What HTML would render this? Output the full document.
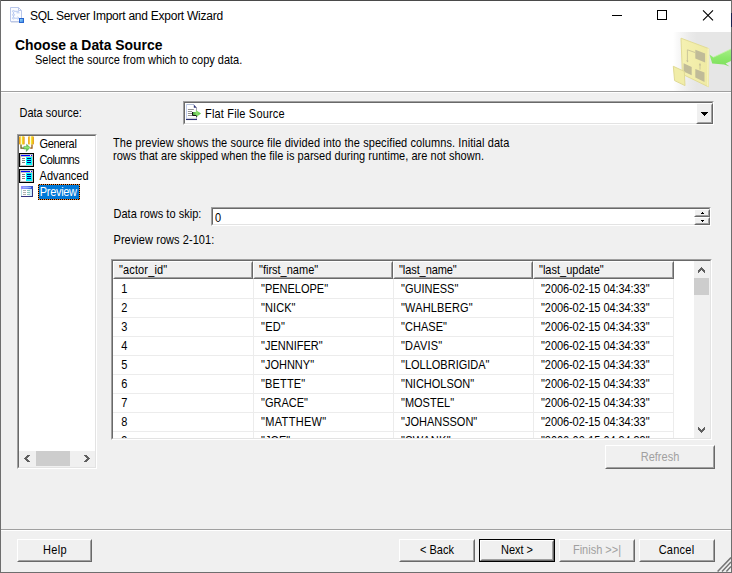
<!DOCTYPE html>
<html>
<head>
<meta charset="utf-8">
<title>SQL Server Import and Export Wizard</title>
<style>
*{box-sizing:border-box;margin:0;padding:0}
html,body{width:732px;height:573px;overflow:hidden;background:#f0f0f0}
body{font-family:"Liberation Sans",sans-serif;font-size:11px;color:#000;position:relative}
.abs{position:absolute}
.t{position:absolute;white-space:nowrap;line-height:13px;font-size:11px;transform-origin:0 10px;transform:scaleY(1.1)}
#win{position:absolute;left:0;top:0;width:732px;height:573px;background:#f0f0f0;overflow:hidden}
#titlebar{left:1px;top:1px;width:730px;height:31px;background:#fff}
#title{left:30px;top:9px;font-size:12px;line-height:15px;letter-spacing:-0.25px;transform:none}
#header{left:1px;top:32px;width:730px;height:59px;background:#fff}
#hgrad{left:668px;top:32px;width:63px;height:59px;background:linear-gradient(to right,#fff 0%,#fff 8%,#f3f3f3 22%,#eaeaea 36%,#e6e6e6 46%,#e6e6e6 100%)}
#h1{left:15.3px;top:37px;font-size:14px;font-weight:bold;line-height:16px;transform-origin:0 0;transform:scaleX(0.992)}
#h2{left:35px;top:54px}
.sepd{height:1px;background:#a0a0a0}
.sepl{height:1px;background:#fff}
.sunken{position:absolute;background:#fff;border:1px solid;border-color:#a0a0a0 #fff #fff #a0a0a0;}
.sunken>.in{position:absolute;left:0;top:0;right:0;bottom:0;border:1px solid;border-color:#696969 #e3e3e3 #e3e3e3 #696969}
.btn{position:absolute;height:23px;background:#f0f0f0;border:1px solid;border-color:#fff #696969 #696969 #fff;text-align:center;font-size:11px;line-height:13px;white-space:nowrap}
.btn>.in{position:absolute;left:0;top:0;right:0;bottom:0;border:1px solid;border-color:#f0f0f0 #a0a0a0 #a0a0a0 #f0f0f0}
.btn>span{position:absolute;left:0;right:0;top:4px;transform-origin:0 10px;transform:scaleY(1.1)}
.btn.dis{color:#a0a0a0}
.btn.def{border-color:#000;}
.btn.def>.in{border-color:#fff #696969 #696969 #fff}
.btn.def>.in>i{position:absolute;left:0;top:0;right:0;bottom:0;border:1px solid;border-color:#f0f0f0 #a0a0a0 #a0a0a0 #f0f0f0}
.raised{position:absolute;background:#f0f0f0;border:1px solid;border-color:#fff #696969 #696969 #fff}
.raised>.in{position:absolute;left:0;top:0;right:0;bottom:0;border:1px solid;border-color:#f0f0f0 #a0a0a0 #a0a0a0 #f0f0f0}
.hl{position:absolute;height:1px;background:#ececec}
.vl{position:absolute;width:1px;background:#ececec}
#gridclip{position:absolute;left:113px;top:261px;width:597px;height:177px;overflow:hidden}
.c{position:absolute;white-space:nowrap;line-height:13px;font-size:11px;transform-origin:0 10px;transform:scaleY(1.1)}
</style>
</head>
<body>
<div id="win">
<div id="titlebar" class="abs"></div>
<svg class="abs" style="left:9px;top:6px" width="17" height="18" viewBox="0 0 17 18">
<defs><linearGradient id="tg" x1="0" y1="0" x2="1" y2="1"><stop offset="0" stop-color="#9fe0ff"/><stop offset="1" stop-color="#2f7fe0"/></linearGradient></defs>
<path d="M1.5 1.5 H9.5 L12.5 4.5 V15.5 H1.5 Z" fill="#fbfcff" stroke="#b9c7ea" stroke-width="1"/>
<path d="M9.5 1.5 V4.5 H12.5" fill="none" stroke="#b9c6ea" stroke-width="1"/>
<path d="M2 16.2 H12.5" stroke="#c5cbe0" stroke-width="1" opacity=".8"/>
<g fill="none" stroke="#b7c8f0" stroke-width="1">
<rect x="3.5" y="4.5" width="2" height="1.6" rx=".8"/><rect x="3.5" y="8" width="2" height="1.6" rx=".8"/><rect x="3.5" y="11.3" width="2" height="1.6" rx=".8"/>
<path d="M4.5 6.2V8M4.5 9.7V11.2M6 5.3H10M7.5 6.8H10.5M6 12.2H9.5M8.5 10.8L10 12.2L8.5 13.6"/>
</g>
<rect x="10.5" y="12.5" width="4" height="4" fill="url(#tg)" stroke="#2a66cf" stroke-width="1"/>
</svg>
<div id="title" class="t">SQL Server Import and Export Wizard</div>
<svg class="abs" style="left:600px;top:1px" width="131" height="30" viewBox="0 0 131 30">
<path d="M12 14.5H22" stroke="#000" stroke-width="1"/>
<rect x="57.5" y="9.5" width="9" height="9" fill="none" stroke="#000" stroke-width="1"/>
<path d="M103 9.3L113 19.3M113 9.3L103 19.3" stroke="#000" stroke-width="1.1"/>
</svg>
<div id="header" class="abs"></div>
<div id="hgrad" class="abs"></div>
<svg class="abs" style="left:668px;top:32px" width="63" height="59" viewBox="668 32 63 59">
<defs>
<linearGradient id="yg" x1="0" y1="0" x2="1" y2="0"><stop offset="0" stop-color="#f5f1b2"/><stop offset="1" stop-color="#efeaa2"/></linearGradient>
<linearGradient id="gg" x1="0" y1="0" x2="0" y2="1"><stop offset="0" stop-color="#a6ee88"/><stop offset=".5" stop-color="#8ce86a"/><stop offset="1" stop-color="#7ee05e"/></linearGradient>
</defs>
<path d="M681 38.2 L708.8 48.6 L708.4 86.8 L682.4 74.2 Z" fill="url(#yg)" stroke="#e2dc96" stroke-width="1"/>
<path d="M707.7 48.3 L708.8 48.6 L708.4 86.8 L707.3 86.3 Z" fill="#f9f6c6"/>
<path d="M695.3 49.8 L705.1 53.4 L705.1 62.4 L695.3 58.6 Z" fill="#c0bb98"/>
<path d="M683.6 63.2 L691.7 66.9 L691.7 75.3 L683.6 71.4 Z" fill="#c0bb98"/>
<path d="M695.3 69 L704.5 72.6 L704.5 82 L695.3 77.6 Z" fill="#c0bb98"/>
<path d="M695.3 52.6 L687.4 49.8 L687.4 61.6" fill="none" stroke="#cbc69a" stroke-width="1"/>
<path d="M686.2 60.2 L687.4 62.6 L688.6 60.8 Z" fill="#c4bf98"/>
<path d="M700 69.6 L700 64.4" fill="none" stroke="#cbc69a" stroke-width="1"/>
<path d="M698.9 65.2 L700 62.8 L701.1 65.6 Z" fill="#c4bf98"/>
<path d="M673.3 66.3 L684.3 71.4 L685 85.6 L674.6 80.6 Z" fill="#f1eda8" stroke="#e0da94" stroke-width="1"/>
<path d="M709.5 54.6 L713.3 57.3 L731 49 L731 61 L725.6 63.4 L729.6 66.4 L724 64.6 L712.2 63.4 Z" fill="url(#gg)"/>
<path d="M713.3 57.3 L731 49" stroke="#c4f4a8" stroke-width="1" opacity=".8"/>
</svg>
<div id="h1" class="t">Choose a Data Source</div>
<div id="h2" class="t">Select the source from which to copy data.</div>
<div class="abs sepd" style="left:1px;top:91px;width:730px"></div>
<div class="abs sepl" style="left:1px;top:92px;width:730px"></div>
<div class="t" style="left:19.5px;top:107px">Data source:</div>
<div class="sunken" style="left:183px;top:101px;width:531px;height:24px"><div class="in"></div></div>
<svg class="abs" style="left:185px;top:103px" width="17" height="18" viewBox="0 0 17 18">
<defs><linearGradient id="cg" x1="0" y1="0" x2="1" y2="0"><stop offset="0" stop-color="#3c9a38"/><stop offset=".5" stop-color="#8ee070"/><stop offset="1" stop-color="#58c244"/></linearGradient></defs>
<path d="M1 1 H9 L12 4 V16.5 H1 Z" fill="#fff"/>
<path d="M1.5 16 V1.5" stroke="#c4d0f0" stroke-width="1"/>
<path d="M1.5 1.5 H9" stroke="#b4c0d8" stroke-width="1"/>
<path d="M11.5 4.5 V16" stroke="#a4a4b4" stroke-width="1"/>
<path d="M2 15.3 H11.5" stroke="#d2d2dc" stroke-width="1"/>
<path d="M1 16.5 H12" stroke="#2c3272" stroke-width="1.1"/>
<path d="M8.8 1.6 L11.8 4.7 H8.8 Z" fill="#2e3474"/>
<path d="M2.9 6.5H8.8M2.9 8.5H7M2.9 10.5H7M2.9 12.5H7.4" stroke="#949494" stroke-width="1"/>
<path d="M7.4 8.9 H10.9 V7 L16 10.4 L11.4 14 L10.9 12.4 H7.4 Z" fill="url(#cg)"/>
<path d="M7.5 9 V12.5 H11.2 L11.8 13.8" fill="none" stroke="#141414" stroke-width="1"/>
</svg>
<div class="t" style="left:205px;top:108px;letter-spacing:0.17px">Flat File Source</div>
<div class="raised" style="left:696px;top:103px;width:17px;height:21px"><div class="in"></div></div>
<svg class="abs" style="left:701px;top:112px" width="7" height="4" viewBox="0 0 7 4" shape-rendering="crispEdges"><path d="M0 0H7V1H6V2H5V3H4V4H3V3H2V2H1V1H0Z" fill="#000"/></svg>
<div class="sunken" style="left:17px;top:134px;width:80px;height:335px"><div class="in"></div></div>
<svg class="abs" style="left:18px;top:135px" width="17" height="18" viewBox="0 0 17 18">
<defs>
<linearGradient id="cy" x1="0" y1="0" x2="1" y2="0"><stop offset="0" stop-color="#e8940c"/><stop offset=".22" stop-color="#f6c226"/><stop offset=".42" stop-color="#fffce6"/><stop offset=".6" stop-color="#eee228"/><stop offset=".8" stop-color="#f2b81c"/><stop offset="1" stop-color="#de8808"/></linearGradient>
<linearGradient id="ga" x1="0" y1="0" x2="0" y2="1"><stop offset="0" stop-color="#4fb04a"/><stop offset=".45" stop-color="#8fe870"/><stop offset="1" stop-color="#2f9a34"/></linearGradient>
</defs>
<rect x="1" y="1.2" width="5.6" height="8.4" rx="1.2" fill="url(#cy)"/>
<rect x="10.1" y="1.2" width="5.8" height="8.4" rx="1.2" fill="url(#cy)"/>
<path d="M3 9.5 V13.2 H6" fill="none" stroke="#6a5c14" stroke-width="1.25"/>
<path d="M14 9.5 V13 H12.2" fill="none" stroke="#9a5808" stroke-width="1.25"/>
<path d="M5.8 11.4 H8.6 V9.3 L12.1 12.5 L8.3 16.6 V14.1 H5.8 Z" fill="url(#ga)" stroke="#3a8a3a" stroke-width=".4"/>
</svg>
<svg class="abs" style="left:19px;top:153px" width="15" height="14" viewBox="0 0 15 14" shape-rendering="crispEdges">
<rect x="0" y="0" width="15" height="14" fill="#000"/>
<rect x="1" y="1" width="13" height="12" fill="#c0c0c0"/>
<rect x="2" y="2" width="11" height="1" fill="#0000ff"/><rect x="11" y="2" width="1" height="1" fill="#fff"/>
<rect x="2" y="4" width="5" height="8" fill="#fff"/><rect x="7" y="4" width="6" height="8" fill="#00ffff"/>
<rect x="3" y="5" width="3" height="1" fill="#808080"/><rect x="3" y="7" width="3" height="1" fill="#808080"/><rect x="3" y="9" width="3" height="1" fill="#808080"/>
<rect x="8" y="5" width="4" height="1" fill="#000080"/><rect x="8" y="7" width="4" height="1" fill="#000080"/><rect x="8" y="9" width="4" height="1" fill="#000080"/>
</svg>
<svg class="abs" style="left:19px;top:169px" width="15" height="14" viewBox="0 0 15 14" shape-rendering="crispEdges">
<rect x="0" y="0" width="15" height="14" fill="#000"/>
<rect x="1" y="1" width="13" height="12" fill="#c0c0c0"/>
<rect x="2" y="2" width="11" height="1" fill="#0000ff"/><rect x="11" y="2" width="1" height="1" fill="#fff"/>
<rect x="2" y="4" width="5" height="8" fill="#fff"/><rect x="7" y="4" width="6" height="8" fill="#00ffff"/>
<rect x="3" y="5" width="3" height="1" fill="#808080"/><rect x="3" y="7" width="3" height="1" fill="#808080"/><rect x="3" y="9" width="3" height="1" fill="#808080"/>
<rect x="8" y="5" width="4" height="1" fill="#000080"/><rect x="8" y="7" width="4" height="1" fill="#000080"/><rect x="8" y="9" width="4" height="1" fill="#000080"/>
</svg>
<svg class="abs" style="left:21px;top:186px" width="12" height="11" viewBox="0 0 12 11">
<defs><linearGradient id="pv" x1="0" y1="0" x2="1" y2="0"><stop offset="0" stop-color="#9a8cff"/><stop offset=".5" stop-color="#6f8cf4"/><stop offset="1" stop-color="#2a48c0"/></linearGradient>
<linearGradient id="pb" x1="0" y1="0" x2="1" y2="0"><stop offset="0" stop-color="#fff"/><stop offset=".55" stop-color="#fff"/><stop offset="1" stop-color="#bfe4f8"/></linearGradient></defs>
<rect x="0" y="0" width="12" height="11" fill="#32327e"/>
<rect x="0" y="0" width="11" height="10" fill="url(#pb)"/>
<rect x="0" y="0" width="12" height="3" fill="url(#pv)"/>
<rect x="0" y="3" width="1" height="7" fill="#b8dce0"/>
<path d="M2 1.5H10" stroke="#a8c0ff" stroke-width="1" opacity=".8"/>
<path d="M2 4.5H5M2 6.5H5M2 8.5H5" stroke="#b0b0b0" stroke-width="1"/>
<path d="M6 4.5H9M6 6.5H9M6 8.5H9" stroke="#88c8c0" stroke-width="1"/>
</svg>
<div class="t" style="left:39.4px;top:138px;letter-spacing:-0.28px">General</div>
<div class="t" style="left:39.4px;top:154px;letter-spacing:-0.52px">Columns</div>
<div class="t" style="left:39.6px;top:170px;letter-spacing:0px">Advanced</div>
<div class="abs" style="left:38px;top:184px;width:42px;height:16px;background:#0078d7"></div>
<div class="abs" style="left:38px;top:184px;width:42px;height:16px;background:repeating-linear-gradient(90deg,#ff8728 0 1px,#000 1px 2px) top/100% 1px no-repeat,repeating-linear-gradient(90deg,#000 0 1px,#ff8728 1px 2px) bottom/100% 1px no-repeat,repeating-linear-gradient(180deg,#ff8728 0 1px,#000 1px 2px) left/1px 100% no-repeat,repeating-linear-gradient(180deg,#000 0 1px,#ff8728 1px 2px) right/1px 100% no-repeat"></div>
<div class="t" style="left:39.8px;top:186px;color:#fff;letter-spacing:-0.31px">Preview</div>
<div class="abs" style="left:19px;top:451px;width:76px;height:16px;background:#f0f0f0"></div>
<div class="abs" style="left:36px;top:451px;width:34px;height:15px;background:#cdcdcd"></div>
<svg class="abs" style="left:24px;top:455px" width="6" height="7" viewBox="0 0 6 7" shape-rendering="crispEdges" fill="#606060"><rect x="3" y="0" width="1" height="1"/><rect x="4" y="0" width="1" height="1"/><rect x="5" y="0" width="1" height="1"/><rect x="2" y="1" width="1" height="1"/><rect x="3" y="1" width="1" height="1"/><rect x="4" y="1" width="1" height="1"/><rect x="1" y="2" width="1" height="1"/><rect x="2" y="2" width="1" height="1"/><rect x="3" y="2" width="1" height="1"/><rect x="0" y="3" width="1" height="1"/><rect x="1" y="3" width="1" height="1"/><rect x="2" y="3" width="1" height="1"/><rect x="1" y="4" width="1" height="1"/><rect x="2" y="4" width="1" height="1"/><rect x="3" y="4" width="1" height="1"/><rect x="2" y="5" width="1" height="1"/><rect x="3" y="5" width="1" height="1"/><rect x="4" y="5" width="1" height="1"/><rect x="3" y="6" width="1" height="1"/><rect x="4" y="6" width="1" height="1"/><rect x="5" y="6" width="1" height="1"/></svg>
<svg class="abs" style="left:84px;top:455px" width="6" height="7" viewBox="0 0 6 7" shape-rendering="crispEdges" fill="#606060"><rect x="0" y="0" width="1" height="1"/><rect x="1" y="0" width="1" height="1"/><rect x="2" y="0" width="1" height="1"/><rect x="1" y="1" width="1" height="1"/><rect x="2" y="1" width="1" height="1"/><rect x="3" y="1" width="1" height="1"/><rect x="2" y="2" width="1" height="1"/><rect x="3" y="2" width="1" height="1"/><rect x="4" y="2" width="1" height="1"/><rect x="3" y="3" width="1" height="1"/><rect x="4" y="3" width="1" height="1"/><rect x="5" y="3" width="1" height="1"/><rect x="2" y="4" width="1" height="1"/><rect x="3" y="4" width="1" height="1"/><rect x="4" y="4" width="1" height="1"/><rect x="1" y="5" width="1" height="1"/><rect x="2" y="5" width="1" height="1"/><rect x="3" y="5" width="1" height="1"/><rect x="0" y="6" width="1" height="1"/><rect x="1" y="6" width="1" height="1"/><rect x="2" y="6" width="1" height="1"/></svg>
<div class="t" style="left:113px;top:137px;letter-spacing:0.085px">The preview shows the source file divided into the specified columns. Initial data</div>
<div class="t" style="left:113px;top:150px;letter-spacing:0.03px">rows that are skipped when the file is parsed during runtime, are not shown.</div>
<div class="t" style="left:113.5px;top:208px;letter-spacing:0.03px">Data rows to skip:</div>
<div class="sunken" style="left:211px;top:207px;width:500px;height:19px"><div class="in"></div></div>
<div class="t" style="left:215px;top:212px">0</div>
<div class="raised" style="left:694px;top:209px;width:16px;height:8px"><div class="in"></div></div>
<div class="raised" style="left:694px;top:217px;width:16px;height:8px"><div class="in"></div></div>
<svg class="abs" style="left:700px;top:212px" width="5" height="3" viewBox="0 0 5 3" shape-rendering="crispEdges"><path d="M2 0H3V1H4V2H1V1H2Z" fill="#000"/></svg>
<svg class="abs" style="left:700px;top:220px" width="5" height="3" viewBox="0 0 5 3" shape-rendering="crispEdges"><path d="M1 0H4V1H3V2H2V1H1Z" fill="#000"/></svg>
<div class="t" style="left:113.5px;top:234px;letter-spacing:0.06px">Preview rows 2-101:</div>
<div class="sunken" id="grid" style="left:111px;top:259px;width:601px;height:181px"><div class="in"></div></div>
<div id="gridclip">
<div class="raised" style="left:0px;top:0px;width:140px;height:18px"><div class="in"></div></div>
<div class="c" style="left:6px;top:3px;letter-spacing:0.13px">&quot;actor_id&quot;</div>
<div class="raised" style="left:140px;top:0px;width:140px;height:18px"><div class="in"></div></div>
<div class="c" style="left:146px;top:3px;letter-spacing:0px">&quot;first_name&quot;</div>
<div class="raised" style="left:280px;top:0px;width:140px;height:18px"><div class="in"></div></div>
<div class="c" style="left:286px;top:3px;letter-spacing:-0.08px">&quot;last_name&quot;</div>
<div class="raised" style="left:420px;top:0px;width:141px;height:18px"><div class="in"></div></div>
<div class="c" style="left:426px;top:3px;letter-spacing:0px">&quot;last_update&quot;</div>
<div class="hl" style="left:0;top:37px;width:561px"></div>
<div class="hl" style="left:0;top:56px;width:561px"></div>
<div class="hl" style="left:0;top:75px;width:561px"></div>
<div class="hl" style="left:0;top:94px;width:561px"></div>
<div class="hl" style="left:0;top:113px;width:561px"></div>
<div class="hl" style="left:0;top:132px;width:561px"></div>
<div class="hl" style="left:0;top:151px;width:561px"></div>
<div class="hl" style="left:0;top:170px;width:561px"></div>
<div class="vl" style="left:140px;top:18px;height:159px"></div>
<div class="vl" style="left:280px;top:18px;height:159px"></div>
<div class="vl" style="left:420px;top:18px;height:159px"></div>
<div class="vl" style="left:560px;top:18px;height:159px"></div>
<div class="c" style="left:8.299999999999997px;top:22px">1</div>
<div class="c" style="left:148px;top:22px;letter-spacing:0px">&quot;PENELOPE&quot;</div>
<div class="c" style="left:288px;top:22px;letter-spacing:0px">&quot;GUINESS&quot;</div>
<div class="c" style="left:428px;top:22px;letter-spacing:-0.07px">&quot;2006-02-15 04:34:33&quot;</div>
<div class="c" style="left:8.299999999999997px;top:41px">2</div>
<div class="c" style="left:148px;top:41px;letter-spacing:0.08px">&quot;NICK&quot;</div>
<div class="c" style="left:288px;top:41px;letter-spacing:0.15px">&quot;WAHLBERG&quot;</div>
<div class="c" style="left:428px;top:41px;letter-spacing:-0.07px">&quot;2006-02-15 04:34:33&quot;</div>
<div class="c" style="left:8.299999999999997px;top:60px">3</div>
<div class="c" style="left:148px;top:60px;letter-spacing:0.3px">&quot;ED&quot;</div>
<div class="c" style="left:288px;top:60px;letter-spacing:0.05px">&quot;CHASE&quot;</div>
<div class="c" style="left:428px;top:60px;letter-spacing:-0.07px">&quot;2006-02-15 04:34:33&quot;</div>
<div class="c" style="left:8.299999999999997px;top:79px">4</div>
<div class="c" style="left:148px;top:79px;letter-spacing:0px">&quot;JENNIFER&quot;</div>
<div class="c" style="left:288px;top:79px;letter-spacing:0.2px">&quot;DAVIS&quot;</div>
<div class="c" style="left:428px;top:79px;letter-spacing:-0.07px">&quot;2006-02-15 04:34:33&quot;</div>
<div class="c" style="left:8.299999999999997px;top:98px">5</div>
<div class="c" style="left:148px;top:98px;letter-spacing:0px">&quot;JOHNNY&quot;</div>
<div class="c" style="left:288px;top:98px;letter-spacing:0px">&quot;LOLLOBRIGIDA&quot;</div>
<div class="c" style="left:428px;top:98px;letter-spacing:-0.07px">&quot;2006-02-15 04:34:33&quot;</div>
<div class="c" style="left:8.299999999999997px;top:117px">6</div>
<div class="c" style="left:148px;top:117px;letter-spacing:0.15px">&quot;BETTE&quot;</div>
<div class="c" style="left:288px;top:117px;letter-spacing:0px">&quot;NICHOLSON&quot;</div>
<div class="c" style="left:428px;top:117px;letter-spacing:-0.07px">&quot;2006-02-15 04:34:33&quot;</div>
<div class="c" style="left:8.299999999999997px;top:136px">7</div>
<div class="c" style="left:148px;top:136px;letter-spacing:0px">&quot;GRACE&quot;</div>
<div class="c" style="left:288px;top:136px;letter-spacing:0px">&quot;MOSTEL&quot;</div>
<div class="c" style="left:428px;top:136px;letter-spacing:-0.07px">&quot;2006-02-15 04:34:33&quot;</div>
<div class="c" style="left:8.299999999999997px;top:155px">8</div>
<div class="c" style="left:148px;top:155px;letter-spacing:0.33px">&quot;MATTHEW&quot;</div>
<div class="c" style="left:288px;top:155px;letter-spacing:0px">&quot;JOHANSSON&quot;</div>
<div class="c" style="left:428px;top:155px;letter-spacing:-0.07px">&quot;2006-02-15 04:34:33&quot;</div>
<div class="c" style="left:8.299999999999997px;top:174px">9</div>
<div class="c" style="left:148px;top:174px;letter-spacing:0px">&quot;JOE&quot;</div>
<div class="c" style="left:288px;top:174px;letter-spacing:0.3px">&quot;SWANK&quot;</div>
<div class="c" style="left:428px;top:174px;letter-spacing:-0.07px">&quot;2006-02-15 04:34:33&quot;</div>
</div>
<div class="abs" style="left:694px;top:261px;width:16px;height:177px;background:#f0f0f0"></div>
<div class="abs" style="left:694px;top:278px;width:15px;height:17px;background:#cdcdcd"></div>
<svg class="abs" style="left:698px;top:267px" width="7" height="6" viewBox="0 0 7 6" shape-rendering="crispEdges" fill="#606060"><rect x="3" y="0" width="1" height="1"/><rect x="2" y="1" width="1" height="1"/><rect x="3" y="1" width="1" height="1"/><rect x="4" y="1" width="1" height="1"/><rect x="1" y="2" width="1" height="1"/><rect x="2" y="2" width="1" height="1"/><rect x="3" y="2" width="1" height="1"/><rect x="4" y="2" width="1" height="1"/><rect x="5" y="2" width="1" height="1"/><rect x="0" y="3" width="1" height="1"/><rect x="1" y="3" width="1" height="1"/><rect x="2" y="3" width="1" height="1"/><rect x="4" y="3" width="1" height="1"/><rect x="5" y="3" width="1" height="1"/><rect x="6" y="3" width="1" height="1"/><rect x="0" y="4" width="1" height="1"/><rect x="1" y="4" width="1" height="1"/><rect x="5" y="4" width="1" height="1"/><rect x="6" y="4" width="1" height="1"/><rect x="0" y="5" width="1" height="1"/><rect x="6" y="5" width="1" height="1"/></svg>
<svg class="abs" style="left:698px;top:427px" width="7" height="6" viewBox="0 0 7 6" shape-rendering="crispEdges" fill="#606060"><rect x="0" y="0" width="1" height="1"/><rect x="6" y="0" width="1" height="1"/><rect x="0" y="1" width="1" height="1"/><rect x="1" y="1" width="1" height="1"/><rect x="5" y="1" width="1" height="1"/><rect x="6" y="1" width="1" height="1"/><rect x="0" y="2" width="1" height="1"/><rect x="1" y="2" width="1" height="1"/><rect x="2" y="2" width="1" height="1"/><rect x="4" y="2" width="1" height="1"/><rect x="5" y="2" width="1" height="1"/><rect x="6" y="2" width="1" height="1"/><rect x="1" y="3" width="1" height="1"/><rect x="2" y="3" width="1" height="1"/><rect x="3" y="3" width="1" height="1"/><rect x="4" y="3" width="1" height="1"/><rect x="5" y="3" width="1" height="1"/><rect x="2" y="4" width="1" height="1"/><rect x="3" y="4" width="1" height="1"/><rect x="4" y="4" width="1" height="1"/><rect x="3" y="5" width="1" height="1"/></svg>
<div class="btn dis" style="left:605px;top:445px;width:110px;height:24px"><div class="in"></div><span style="top:5px">Refresh</span></div>
<div class="abs sepd" style="left:1px;top:529px;width:730px"></div>
<div class="abs sepl" style="left:1px;top:530px;width:730px"></div>
<div class="btn" style="left:17px;top:539px;width:75px"><div class="in"></div><span style="letter-spacing:0.3px;left:1px">Help</span></div>
<div class="btn" style="left:399px;top:539px;width:76px"><div class="in"></div><span>&lt; Back</span></div>
<div class="btn def" style="left:479px;top:539px;width:76px"><div class="in"><i></i></div><span>Next &gt;</span></div>
<div class="btn dis" style="left:559px;top:539px;width:76px"><div class="in"></div><span>Finish &gt;&gt;|</span></div>
<div class="btn" style="left:639px;top:539px;width:76px"><div class="in"></div><span style="left:-1px;letter-spacing:0.25px">Cancel</span></div>
<svg class="abs" style="left:717px;top:557px" width="14" height="15" viewBox="0 0 14 15">
<path d="M14 0.6 L0.6 14.5 M14 5 L5 14.5 M14 9.4 L9.4 14.5" stroke="#757575" stroke-width="1.5"/>

</svg>
<div class="abs" style="left:0;top:0;width:732px;height:1px;background:#4a4a4a"></div>
<div class="abs" style="left:0;top:0;width:1px;height:573px;background:#6e6e6e"></div>
<div class="abs" style="left:731px;top:0;width:1px;height:573px;background:#6e6e6e"></div>
<div class="abs" style="left:731px;top:13px;width:1px;height:14px;background:#1a2350"></div>
<div class="abs" style="left:0;top:572px;width:732px;height:1px;background:#6e6e6e"></div>
</div>
</body>
</html>
